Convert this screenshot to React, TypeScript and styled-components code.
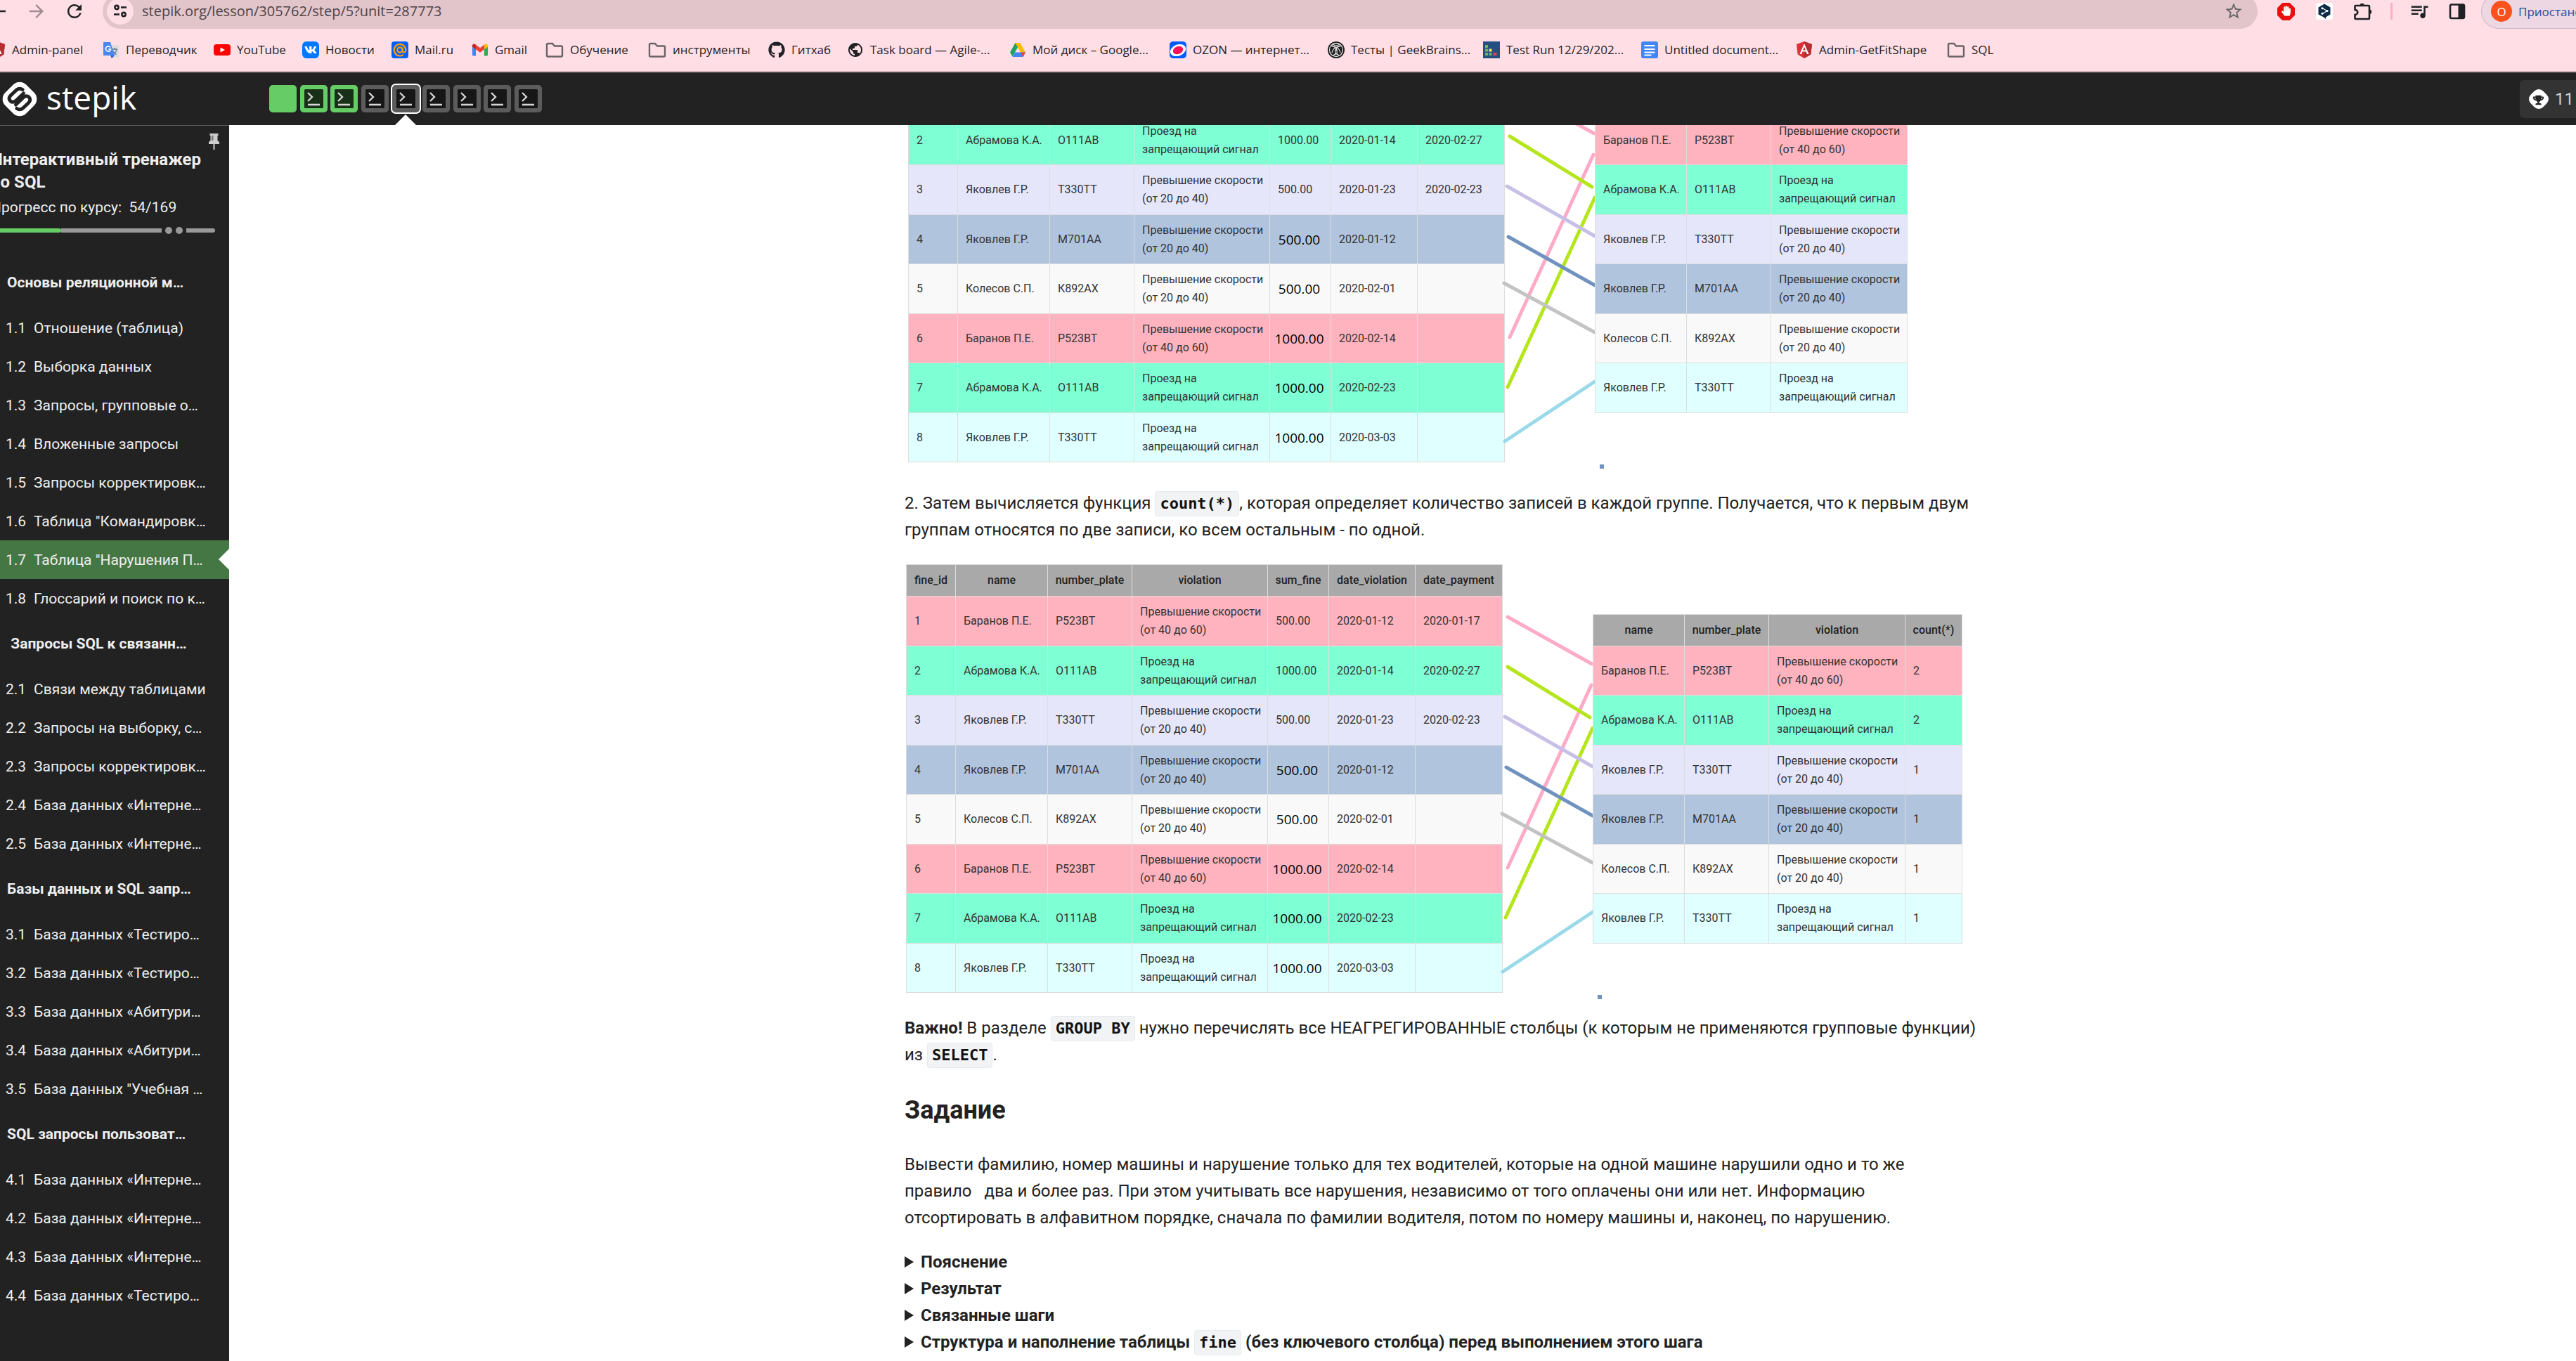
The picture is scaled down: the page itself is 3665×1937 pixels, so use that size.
import React from "react";
import styled, { createGlobalStyle } from "styled-components";
import { MdArrowBack, MdArrowForward, MdRefresh, MdStarBorder, MdQueueMusic, MdPublic } from "react-icons/md";
import { FaGithub, FaHandPaper, FaTrophy, FaVk } from "react-icons/fa";

const GlobalStyle = createGlobalStyle`
  *, *::before, *::after { box-sizing: border-box; }
  html, body { margin: 0; padding: 0; background: #fff; }
  body { font-family: Roboto, "Noto Sans", sans-serif; color: #222; overflow: hidden; }
  button { font: inherit; border: 0; padding: 0; background: none; cursor: pointer; }
  a { color: inherit; text-decoration: none; }
  svg { display: block; flex: none; }
`;

const Window = styled.div`
  display: flex;
  flex-direction: column;
  height: 100vh;
  overflow: hidden;
`;

/* ---------- browser chrome ---------- */

const Browser = styled.div`
  flex: none;
  overflow: hidden;
  background: #ffdfe5;
  border-bottom: 2px solid #cdb1b8;
  font-family: "Open Sans", "Noto Sans", sans-serif;
  color: #1f2124;
`;

const Toolbar = styled.div`
  display: flex;
  align-items: center;
  height: 32px;
`;

const NavButtons = styled.div`
  flex: none;
  display: flex;
  align-items: center;
  gap: 24px;
  width: 146px;
  margin-left: -17px;
  margin-right: 17px;
`;

const IconButton = styled.button<{ $tone?: string }>`
  flex: none;
  display: grid;
  place-items: center;
  color: ${(p) => p.$tone ?? "#1f2124"};
`;

const AddressBar = styled.div`
  flex: 1;
  display: flex;
  align-items: center;
  height: 50px;
  padding: 0 20px 0 6px;
  border-radius: 25px;
  background: #e1c5ca;
`;

const SiteInfo = styled.button`
  flex: none;
  display: grid;
  place-items: center;
  width: 38px;
  height: 38px;
  border-radius: 50%;
  background: #ffdfe5;
`;

const Url = styled.input`
  flex: 1;
  min-width: 0;
  margin-left: 12px;
  padding: 0;
  border: 0;
  outline: 0;
  background: transparent;
  font: 20px/28px "Open Sans", "Noto Sans", sans-serif;
  color: #4f4347;
`;

const Extensions = styled.div`
  flex: none;
  display: flex;
  align-items: center;
  gap: 30px;
  width: 318px;
  padding-left: 28px;
`;

const Divider = styled.span`
  width: 3px;
  height: 24px;
  margin: 0 -4px;
  background: #ffb0c0;
`;

const MediaControl = styled.button`
  display: grid;
  margin: 0 -3px;
  color: #1f2124;
`;

const Profile = styled.button`
  flex: none;
  display: flex;
  align-items: center;
  gap: 9px;
  width: 135px;
  height: 50px;
  padding-left: 13px;
  overflow: hidden;
  white-space: nowrap;
  border: 1px solid #cdb7c6;
  border-right: 0;
  border-radius: 25px 0 0 25px;
  background: #edd7e2;
  color: #1c4fa1;
  font-size: 17px;
`;

const Avatar = styled.span`
  flex: none;
  display: grid;
  place-items: center;
  width: 30px;
  height: 30px;
  border-radius: 50%;
  background: #f9511d;
  color: #fff;
  font-size: 17px;
`;

const Bookmarks = styled.nav`
  display: grid;
  grid-template-columns: 162px 158px 126px 127px 114px 105px 146px 171px 112px 231px 228px 225px 221px 225px 220px 215px auto;
  align-items: center;
  height: 60px;
  margin: 9px 0 0 -16px;
`;

const Bookmark = styled.a`
  display: flex;
  align-items: center;
  gap: 9px;
  white-space: nowrap;
  font-size: 17px;
  line-height: 24px;
`;

/* ---------- course header ---------- */

const Header = styled.header`
  flex: none;
  display: flex;
  align-items: center;
  height: 75px;
  background: #222;
`;

const Brand = styled.a`
  flex: none;
  display: flex;
  align-items: center;
  gap: 13px;
  width: 383px;
  padding-left: 3px;
  color: #fff;
`;

const BrandName = styled.span`
  padding-bottom: 6px;
  font-family: "Open Sans", "Noto Sans", sans-serif;
  font-size: 46px;
  line-height: 48px;
`;

const Steps = styled.nav`
  flex: none;
  display: flex;
  align-items: center;
  justify-content: space-between;
  align-self: stretch;
  width: 388px;
`;

const Step = styled.a<{ $done?: boolean; $current?: boolean }>`
  position: relative;
  display: grid;
  place-items: center;
  width: 39px;
  height: 39px;
  border-radius: 5px;
  background: ${(p) => (p.$done ? "#6c6" : "#5c5c5c")};
  box-shadow: ${(p) => (p.$current ? "0 0 0 2px #fff" : "none")};
  ${(p) =>
    p.$current &&
    `&::after {
      content: "";
      position: absolute;
      left: 50%;
      bottom: -18px;
      margin-left: -15px;
      border: 15px solid transparent;
      border-top: 0;
      border-bottom-color: #fff;
    }`}
`;

const Score = styled.button`
  flex: none;
  display: flex;
  align-items: center;
  gap: 8px;
  width: 80px;
  height: 54px;
  margin-left: auto;
  padding-left: 12px;
  border-radius: 6px 0 0 6px;
  background: #333;
  color: #ccc;
  font-size: 24px;
`;

/* ---------- layout ---------- */

const Body = styled.div`
  flex: 1;
  min-height: 0;
  display: grid;
  grid-template-columns: 326px 1fr;
`;

const Sidebar = styled.aside`
  overflow: hidden;
  border-top: 1px solid #5a5a5a;
  background: #222;
  color: #eee;
`;

const CourseHead = styled.div`
  position: relative;
  height: 186px;
  margin-left: -13px;
  padding-top: 32px;
`;

const CourseTitle = styled.h2`
  margin: 0;
  font-size: 24px;
  line-height: 32px;
  font-weight: 700;
`;

const CourseProgress = styled.p`
  margin: 4px 0 0;
  font-size: 21px;
  line-height: 32px;
  white-space: pre;
`;

const Track = styled.div`
  display: flex;
  align-items: center;
  height: 10px;
  margin-top: 12px;
`;

const TrackPart = styled.span<{ $w: number; $c: string; $round?: boolean }>`
  width: ${(p) => p.$w}px;
  height: 6px;
  background: ${(p) => p.$c};
  border-radius: ${(p) => (p.$round ? "0 3px 3px 0" : "0")};
`;

const TrackDot = styled.span`
  width: 10px;
  height: 10px;
  margin: 0 0 0 5px;
  border-radius: 50%;
  background: #999;
`;

const TrackGap = styled.span`
  width: 5px;
`;

const Pin = styled.button`
  position: absolute;
  top: 11px;
  right: 14px;
  color: #ccc;
`;

const SectionTitle = styled.h3`
  margin: 0;
  padding-left: 10px;
  height: 74px;
  font-size: 21px;
  line-height: 74px;
  font-weight: 700;
  white-space: pre;
`;

const Lesson = styled.a<{ $active?: boolean }>`
  position: relative;
  display: grid;
  grid-template-columns: 40px 1fr;
  align-items: center;
  height: 55px;
  padding-left: 8px;
  font-size: 21px;
  white-space: nowrap;
  background: ${(p) => (p.$active ? "#457745" : "transparent")};
  ${(p) =>
    p.$active &&
    `&::after {
      content: "";
      position: absolute;
      right: 0;
      top: 12px;
      border: 15px solid transparent;
      border-left: 0;
      border-right-color: #fff;
    }`}
`;

const Main = styled.main`
  overflow: hidden;
  padding-left: 113px;
`;

const Column = styled.article`
  max-width: 1530px;
  margin: 0 auto;
  font-size: 24px;
  line-height: 38px;
  white-space: nowrap;
`;

const Paragraph = styled.p<{ $top: number }>`
  margin: ${(p) => p.$top}px 0 0;
`;

const Heading = styled.h2`
  margin: 40px 0 0;
  font-size: 36px;
  line-height: 40px;
  font-weight: 700;
`;

const Code = styled.code`
  display: inline-block;
  margin: -2px 0;
  padding: 0 6px;
  border: 1px solid #e8eaed;
  border-radius: 4px;
  background: #f2f3f5;
  color: #111;
  font: 700 22px/34px "DejaVu Sans Mono", monospace;
  vertical-align: baseline;
`;

const Hints = styled.div`
  margin-top: 25px;
  font-weight: 700;
`;

const HintTitle = styled.summary`
  list-style: none;
  cursor: pointer;
  &::before {
    content: "";
    display: inline-block;
    margin-right: 10px;
    border: 8px solid transparent;
    border-left: 13px solid #222;
    border-right: 0;
  }
`;

/* ---------- grouping figure ---------- */

const Figure = styled.figure<{ $top: number; $indent: number }>`
  display: flex;
  align-items: flex-start;
  margin: ${(p) => p.$top}px 0 0 ${(p) => p.$indent}px;
`;

const Table = styled.table<{ $width: number; $top?: number; $tallFirst?: boolean }>`
  flex: none;
  width: ${(p) => p.$width}px;
  margin-top: ${(p) => p.$top ?? 0}px;
  table-layout: fixed;
  border-collapse: collapse;
  font-size: 16px;
  line-height: 26px;
  color: #333;
  tbody tr { height: ${(p) => (p.$tallFirst ? 71 : 70)}px; }
  tbody tr:nth-child(even) { height: ${(p) => (p.$tallFirst ? 70 : 71)}px; }
`;

const Th = styled.th`
  height: 45px;
  padding: 0;
  border: 1px solid #ddd;
  background: #a9a9a9;
  font-weight: 500;
  text-align: center;
  color: #222;
`;

const Row = styled.tr<{ $tint: string }>`
  background: ${(p) => p.$tint};
`;

const Td = styled.td<{ $retyped?: boolean }>`
  padding: 0 0 0 11px;
  border: 1px solid #ddd;
  ${(p) =>
    p.$retyped &&
    `padding: 0 3px 0 0;
    text-align: center;
    font-family: "Open Sans", "Noto Sans", sans-serif;
    font-size: 19px;
    color: #000;`}
`;

const Links = styled.svg<{ $top: number }>`
  width: 128px;
  height: 616px;
  margin-top: ${(p) => p.$top}px;
  overflow: visible;
`;

/* ---------- icons ---------- */

const SvgIcon = ({ children, size = 24, box = 24 }: { children: React.ReactNode; size?: number; box?: number }) => (
  <svg width={size} height={size} viewBox={`0 0 ${box} ${box}`} fill="none" aria-hidden="true">
    {children}
  </svg>
);

const TuneIcon = () => (
  <SvgIcon size={20} box={20}>
    <g stroke="#1f2124" strokeWidth="2.6">
      <circle cx="5" cy="4.5" r="2.6" /><path d="M11 4.5h8" />
      <circle cx="15" cy="14.5" r="2.6" /><path d="M1 14.5h8" />
    </g>
  </SvgIcon>
);

const AngularIcon = () => (
  <SvgIcon>
    <path d="M12 0 23 4l-1.700 14.500L12 24 2.700 18.500 1 4z" fill="#dd3136" />
    <path d="M12 0v24l9.300-5.500L23 4z" fill="#b52e31" />
    <path d="M12 3 5.500 18h2.600l1.300-3.400h5.200L15.900 18h2.600zm0 4.800 1.900 4.600h-3.800z" fill="#fff" />
  </SvgIcon>
);

const TranslateIcon = () => (
  <SvgIcon>
    <path d="M9 5h13a1 1 0 0 1 1 1v16a1 1 0 0 1-1 1h-8z" fill="#dcdcdc" />
    <path d="M13 11h8M17 9v2m3 0c-.5 4-3 6-5 7m-.500-5c1 3 3 4.500 5 5.500" stroke="#607d9b" strokeWidth="1.500" />
    <path d="M2 1h9l6 19H2a1 1 0 0 1-1-1V2a1 1 0 0 1 1-1z" fill="#4a86f0" />
    <path d="M11 20h6l-4 4z" fill="#3a5bc7" />
    <path d="M11 8.500A3.600 3.600 0 1 0 11.600 11H8.300" stroke="#fff" strokeWidth="1.700" />
  </SvgIcon>
);

const YoutubeIcon = () => (
  <SvgIcon>
    <rect y="4" width="24" height="16" rx="4" fill="#f00" />
    <path d="m9.500 8.500 6.500 3.500-6.500 3.500z" fill="#fff" />
  </SvgIcon>
);

const VkTile = styled.span`
  display: grid;
  place-items: center;
  width: 24px;
  height: 24px;
  border-radius: 6px;
  background: #07f;
  color: #fff;
`;

const MailIcon = () => (
  <SvgIcon>
    <rect width="24" height="24" rx="4" fill="#005ff9" />
    <g stroke="#ff9e00" strokeWidth="2.200">
      <circle cx="12" cy="12" r="3.700" />
      <path d="M15.700 8.500V13c0 4 4.600 3 4.600-1A8.300 8.300 0 1 0 17 18.800" />
    </g>
  </SvgIcon>
);

const GmailIcon = () => (
  <SvgIcon>
    <path d="M1 7v12a1.500 1.500 0 0 0 1.500 1.500H6V11z" fill="#4285f4" />
    <path d="M18 11v9.500h3.500A1.500 1.500 0 0 0 23 19V7z" fill="#34a853" />
    <path d="M18 4.800v6.400l5-3.700V6c0-2.200-2-3-3.500-2.200z" fill="#fbbc04" />
    <path d="M6 11.200V4.800l6 4.500 6-4.500v6.400l-6 4.500z" fill="#ea4335" />
    <path d="M1 6v1.500l5 3.700V4.800l-1.500-1C3 3 1 3.800 1 6z" fill="#c5221f" />
  </SvgIcon>
);

const FolderIcon = () => (
  <SvgIcon size={26} box={26}>
    <path d="M2 5.500a1.500 1.500 0 0 1 1.500-1.500H10l3 3.500h9.500A1.500 1.500 0 0 1 24 9v12a1.500 1.500 0 0 1-1.500 1.500h-19A1.500 1.500 0 0 1 2 21z" stroke="#6a6468" strokeWidth="2.400" />
  </SvgIcon>
);

const DriveIcon = () => (
  <SvgIcon>
    <path d="M8.500 2h7L8 15.500 4.500 21.500 1 15.500z" fill="#1ea362" />
    <path d="M8.500 2h7L23 15.500h-7z" fill="#fbbc04" />
    <path d="M8 15.500h15l-3.500 6.500h-15z" fill="#4285f4" />
    <path d="M16 15.500h7l-3.500 6.500z" fill="#ea4335" />
  </SvgIcon>
);

const OzonIcon = () => (
  <SvgIcon>
    <rect width="24" height="24" rx="5" fill="#005bff" />
    <ellipse cx="12" cy="12.500" rx="11.500" ry="8" transform="rotate(-22 12 12.500)" fill="#fff" />
    <ellipse cx="12" cy="12.500" rx="7.500" ry="5.500" transform="rotate(-22 12 12.500)" fill="#f91155" />
  </SvgIcon>
);

const GeekIcon = () => (
  <SvgIcon>
    <circle cx="12" cy="12" r="12" fill="#1d1d1d" />
    <g stroke="#ddd" strokeWidth="1.300">
      <circle cx="12" cy="12" r="9.500" />
      <path d="M5 6c6 1 9 5 8 12M19 6c-6 1-9 5-8 12M6 16c1-4 4-7 6-8 2 1 5 4 6 8M8 4c2 3 6 3 8 0M8 20c2-3 6-3 8 0" />
    </g>
  </SvgIcon>
);

const TestRunIcon = () => (
  <SvgIcon>
    <path d="M0 0h24v24H0z" fill="#24507f" />
    <path d="M3 5h4v4H3zM3 10.500h4v4H3zM3 16h4v4H3zM8.500 16h4v4h-4z" fill="#65b95b" />
    <path d="M8.500 10.500h4v4h-4z" fill="#ffe14d" />
    <path d="M14.500 16h5v4h-5z" fill="#e5404c" />
  </SvgIcon>
);

const DocIcon = () => (
  <SvgIcon>
    <rect width="24" height="24" rx="3" fill="#4285f4" />
    <path d="M4.500 6h15M4.500 11h15M4.500 15.500h15M4.500 19.500h10" stroke="#fff" strokeWidth="2.200" />
  </SvgIcon>
);

const AdblockIcon = () => (
  <SvgIcon size={25}>
    <path d="M7 0h10l7 7v10l-7 7H7l-7-7V7z" fill="#ea1010" />
    <g transform="translate(5 4)"><FaHandPaper size={14} color="#fff" /></g>
  </SvgIcon>
);

const DeeplIcon = () => (
  <SvgIcon>
    <rect width="24" height="24" rx="3" fill="#fff" />
    <path d="m12 1.500 8.500 5v10L14 20.500V23l-3-2.500-7.500-4v-10z" fill="#0f2b46" />
    <path d="m9 7.500 7 4-7 4" stroke="#fff" strokeWidth="1.200" />
    <circle cx="9" cy="7.800" r="1.600" fill="#fff" /><circle cx="16" cy="11.500" r="1.600" fill="#fff" /><circle cx="9" cy="15.300" r="1.600" fill="#fff" />
  </SvgIcon>
);

const PuzzleIcon = () => (
  <SvgIcon size={26} box={26}>
    <path d="M2.500 5h18.500a1 1 0 0 1 1 1v17a1 1 0 0 1-1 1H2.500a1 1 0 0 1-1-1v-5c5 0 5-7 0-7V6a1 1 0 0 1 1-1z" stroke="#1f2124" strokeWidth="2.600" />
    <path d="M8.500 5a3.200 3.200 0 0 1 6.400 0zM22 10.500a3.200 3.200 0 0 1 0 6.400z" fill="#1f2124" />
  </SvgIcon>
);

const PanelIcon = () => (
  <SvgIcon>
    <rect x="2" y="2.500" width="20" height="19.500" rx="2" stroke="#1f2124" strokeWidth="2.600" />
    <path d="M13.500 2.500H21v19.500h-7.500z" fill="#1f2124" />
  </SvgIcon>
);

const StepikMark = () => (
  <svg width="50" height="50" viewBox="0 0 50 50" fill="none" aria-hidden="true">
    <rect x="4" y="4" width="42" height="42" rx="13" transform="rotate(45 25 25)" fill="#fff" />
    <g stroke="#222" strokeWidth="5" strokeLinecap="round" strokeLinejoin="round">
      <path d="M29 11.500c-3-2-6-1.500-8.500.500l-8 7.500c-3 3-3 6-.500 8.500 2.500 2 5 1.500 7.500-.500L30.500 17" />
      <path d="M21 38.500c3 2 6 1.500 8.500-.500l8-7.500c3-3 3-6 .500-8.500-2.500-2-5-1.500-7.500.500L19.500 33" />
    </g>
  </svg>
);

const TerminalIcon = ({ done }: { done?: boolean }) => (
  <SvgIcon size={27} box={27}>
    <rect width="27" height="27" rx="1.500" fill={done ? "#183018" : "#161616"} />
    <path d="m5 5 6 6-6 6" stroke="#d4d4d4" strokeWidth="2.400" />
    <path d="M5 22h17" stroke="#d4d4d4" strokeWidth="2.600" />
  </SvgIcon>
);

const ScoreIcon = () => (
  <SvgIcon size={30} box={30}>
    <rect x="2.500" y="2.500" width="25" height="25" rx="9" transform="rotate(45 15 15)" fill="#fff" />
    <g transform="translate(7 9)"><FaTrophy size={15} color="#222" /></g>
  </SvgIcon>
);

const PinIcon = () => (
  <svg width="15" height="24" viewBox="0 0 15 24" aria-hidden="true">
    <path d="M1.500 0h12v3h-1v7l2.500 2v3H0v-3l2.500-2V3h-1zM6.500 15h2v8h-2z" fill="#ccc" />
    <path d="M4 3h2.500v7H4z" fill="#777" />
  </svg>
);

/* ---------- data ---------- */

const bookmarks: [React.ReactNode, string][] = [
  [<AngularIcon />, "Admin-panel"],
  [<TranslateIcon />, "Переводчик"],
  [<YoutubeIcon />, "YouTube"],
  [<VkTile><FaVk size={18} /></VkTile>, "Новости"],
  [<MailIcon />, "Mail.ru"],
  [<GmailIcon />, "Gmail"],
  [<FolderIcon />, "Обучение"],
  [<FolderIcon />, "инструменты"],
  [<FaGithub size={24} />, "Гитхаб"],
  [<MdPublic size={24} />, "Task board — Agile-..."],
  [<DriveIcon />, "Мой диск – Google..."],
  [<OzonIcon />, "OZON — интернет..."],
  [<GeekIcon />, "Тесты | GeekBrains..."],
  [<TestRunIcon />, "Test Run 12/29/202..."],
  [<DocIcon />, "Untitled document..."],
  [<AngularIcon />, "Admin-GetFitShape"],
  [<FolderIcon />, "SQL"],
];

const sections: { title: string; lessons: [string, string][] }[] = [
  {
    title: "Основы реляционной м…",
    lessons: [
      ["1.1", "Отношение (таблица)"],
      ["1.2", "Выборка данных"],
      ["1.3", "Запросы, групповые о…"],
      ["1.4", "Вложенные запросы"],
      ["1.5", "Запросы корректировк…"],
      ["1.6", 'Таблица "Командировк…'],
      ["1.7", 'Таблица "Нарушения П…'],
      ["1.8", "Глоссарий и поиск по к…"],
    ],
  },
  {
    title: " Запросы SQL к связанн…",
    lessons: [
      ["2.1", "Связи между таблицами"],
      ["2.2", "Запросы на выборку, с…"],
      ["2.3", "Запросы корректировк…"],
      ["2.4", "База данных «Интерне…"],
      ["2.5", "База данных «Интерне…"],
    ],
  },
  {
    title: "Базы данных и SQL запр…",
    lessons: [
      ["3.1", "База данных «Тестиро…"],
      ["3.2", "База данных «Тестиро…"],
      ["3.3", "База данных «Абитури…"],
      ["3.4", "База данных «Абитури…"],
      ["3.5", 'База данных "Учебная …'],
    ],
  },
  {
    title: "SQL запросы пользоват…",
    lessons: [
      ["4.1", "База данных «Интерне…"],
      ["4.2", "База данных «Интерне…"],
      ["4.3", "База данных «Интерне…"],
      ["4.4", "База данных «Тестиро…"],
    ],
  },
];

const pink = "#ffb3bf";
const mint = "#7fffd4";
const lavender = "#e5e6fa";
const steel = "#b0c4de";
const grey = "#f9f9f9";
const cyan = "#e0ffff";

const fast40 = ["Превышение скорости", "(от 20 до 40)"];
const fast60 = ["Превышение скорости", "(от 40 до 60)"];
const signal = ["Проезд на", "запрещающий сигнал"];

type Cell = string | string[];
type Line = { tint: string; cells: Cell[] };

const fines: Line[] = [
  { tint: pink, cells: ["1", "Баранов П.Е.", "Р523ВТ", fast60, "500.00", "2020-01-12", "2020-01-17"] },
  { tint: mint, cells: ["2", "Абрамова К.А.", "О111АВ", signal, "1000.00", "2020-01-14", "2020-02-27"] },
  { tint: lavender, cells: ["3", "Яковлев Г.Р.", "Т330ТТ", fast40, "500.00", "2020-01-23", "2020-02-23"] },
  { tint: steel, cells: ["4", "Яковлев Г.Р.", "М701АА", fast40, "500.00", "2020-01-12", ""] },
  { tint: grey, cells: ["5", "Колесов С.П.", "К892АХ", fast40, "500.00", "2020-02-01", ""] },
  { tint: pink, cells: ["6", "Баранов П.Е.", "Р523ВТ", fast60, "1000.00", "2020-02-14", ""] },
  { tint: mint, cells: ["7", "Абрамова К.А.", "О111АВ", signal, "1000.00", "2020-02-23", ""] },
  { tint: cyan, cells: ["8", "Яковлев Г.Р.", "Т330ТТ", signal, "1000.00", "2020-03-03", ""] },
];

const groups: Line[] = [
  { tint: pink, cells: ["Баранов П.Е.", "Р523ВТ", fast60, "2"] },
  { tint: mint, cells: ["Абрамова К.А.", "О111АВ", signal, "2"] },
  { tint: lavender, cells: ["Яковлев Г.Р.", "Т330ТТ", fast40, "1"] },
  { tint: steel, cells: ["Яковлев Г.Р.", "М701АА", fast40, "1"] },
  { tint: grey, cells: ["Колесов С.П.", "К892АХ", fast40, "1"] },
  { tint: cyan, cells: ["Яковлев Г.Р.", "Т330ТТ", signal, "1"] },
];

const fineHead = ["fine_id", "name", "number_plate", "violation", "sum_fine", "date_violation", "date_payment"];
const groupHead = ["name", "number_plate", "violation", "count(*)"];
const fineCols = [70, 131, 120, 193, 87, 123, 124];
const groupCols = [130, 120, 194, 81];

const links: [string, number, number, number, number][] = [
  ["#ffaac6", 7, 75, 127, 142],
  ["#ffaac6", 7, 432, 126, 172],
  ["#b5e61d", 7, 146, 124, 218],
  ["#b5e61d", 4, 503, 128, 233],
  ["#c8bfe7", 3, 217, 128, 288],
  ["#7092be", 5, 289, 128, 358],
  ["#c3c3c3", -1, 355, 128, 425],
  ["#99d9ea", 0, 580, 128, 495],
];

const DataTable = ({
  widths, head, lines, top, tallFirst, sumIndex = -1,
}: {
  widths: number[]; head?: string[]; lines: Line[]; top?: number; tallFirst?: boolean; sumIndex?: number;
}) => (
  <Table $width={widths.reduce((a, b) => a + b, 0)} $top={top} $tallFirst={tallFirst}>
    <colgroup>{widths.map((w, i) => <col key={i} width={w} />)}</colgroup>
    {head && <thead><tr>{head.map((h) => <Th key={h} scope="col">{h}</Th>)}</tr></thead>}
    <tbody>
      {lines.map((line, r) => (
        <Row key={r} $tint={line.tint}>
          {widths.map((_, c) => {
            const cell = line.cells[c];
            return (
              <Td key={c} $retyped={c === sumIndex && Number(line.cells[0]) > 3}>
                {Array.isArray(cell) ? <>{cell[0]}<br />{cell[1]}</> : cell}
              </Td>
            );
          })}
        </Row>
      ))}
    </tbody>
  </Table>
);

const LinkLines = ({ top }: { top: number }) => (
  <Links $top={top} aria-hidden="true">
    {links.map(([c, x1, y1, x2, y2], i) => (
      <line key={i} x1={x1} y1={y1} x2={x2} y2={y2} stroke={c} strokeWidth={5} strokeLinecap="round" />
    ))}
    <rect x="135" y="613" width="6" height="6" fill="#7092be" />
  </Links>
);

export default function App() {
  return (
    <Window>
      <GlobalStyle />
      <Browser>
        <Toolbar>
          <NavButtons>
            <IconButton aria-label="Назад"><MdArrowBack size={30} /></IconButton>
            <IconButton aria-label="Вперёд" $tone="#a08d93"><MdArrowForward size={30} /></IconButton>
            <IconButton aria-label="Обновить"><MdRefresh size={30} /></IconButton>
          </NavButtons>
          <AddressBar>
            <SiteInfo aria-label="Сведения о сайте"><TuneIcon /></SiteInfo>
            <Url aria-label="Адрес" defaultValue="stepik.org/lesson/305762/step/5?unit=287773" />
            <IconButton aria-label="Добавить в закладки" $tone="#666"><MdStarBorder size={28} /></IconButton>
          </AddressBar>
          <Extensions>
            <AdblockIcon />
            <DeeplIcon />
            <PuzzleIcon />
            <Divider />
            <MediaControl aria-label="Медиа"><MdQueueMusic size={30} /></MediaControl>
            <PanelIcon />
          </Extensions>
          <Profile><Avatar>О</Avatar>Приостано</Profile>
        </Toolbar>
        <Bookmarks>
          {bookmarks.map(([icon, label], i) => (
            <Bookmark key={i} href="#">{icon}{label}</Bookmark>
          ))}
        </Bookmarks>
      </Browser>

      <Header>
        <Brand href="#"><StepikMark /><BrandName>stepik</BrandName></Brand>
        <Steps>
          {Array.from({ length: 9 }, (_, i) => (
            <Step key={i} href="#" aria-label={`Шаг ${i + 1}`} $done={i < 3} $current={i === 4}>
              {i > 0 && <TerminalIcon done={i < 3} />}
            </Step>
          ))}
        </Steps>
        <Score><ScoreIcon />11</Score>
      </Header>

      <Body>
        <Sidebar>
          <CourseHead>
            <CourseTitle>Интерактивный тренажер<br />по SQL</CourseTitle>
            <CourseProgress>Прогресс по курсу:  54/169</CourseProgress>
            <Track>
              <TrackPart $w={100} $c="#6c6" $round />
              <TrackPart $w={143} $c="#999" />
              <TrackDot />
              <TrackDot />
              <TrackGap />
              <TrackPart $w={41} $c="#999" $round />
            </Track>
            <Pin aria-label="Закрепить"><PinIcon /></Pin>
          </CourseHead>
          {sections.map((s) => (
            <nav key={s.title} aria-label={s.title.trim()}>
              <SectionTitle>{s.title}</SectionTitle>
              {s.lessons.map(([n, t]) => (
                <Lesson key={n} href="#" $active={n === "1.7"}><span>{n}</span><span>{t}</span></Lesson>
              ))}
            </nav>
          ))}
        </Sidebar>

        <Main>
          <Column>
            <Figure $top={-14} $indent={5}>
              <DataTable widths={fineCols} lines={fines.slice(1)} sumIndex={4} />
              <LinkLines top={-116} />
              <DataTable widths={groupCols.slice(0, 3)} lines={groups} />
            </Figure>
            <Paragraph $top={33}>
              2. Затем вычисляется функция <Code>count(*)</Code>, которая определяет количество записей в каждой группе. Получается, что к первым двум
              <br />
              группам относятся по две записи, ко всем остальным - по одной.
            </Paragraph>
            <Figure $top={30} $indent={2}>
              <DataTable widths={fineCols} head={fineHead} lines={fines} sumIndex={4} tallFirst />
              <LinkLines top={0} />
              <DataTable widths={groupCols} head={groupHead} lines={groups} top={71} />
            </Figure>
            <Paragraph $top={25}>
              <b>Важно!</b> В разделе <Code>GROUP BY</Code> нужно перечислять все НЕАГРЕГИРОВАННЫЕ столбцы (к которым не применяются групповые функции)
              <br />
              из <Code>SELECT</Code>.
            </Paragraph>
            <Heading>Задание</Heading>
            <Paragraph $top={38}>
              Вывести фамилию, номер машины и нарушение только для тех водителей, которые на одной машине нарушили одно и то же
              <br />
              правило{"\u00a0\u00a0 "}два и более раз. При этом учитывать все нарушения, независимо от того оплачены они или нет. Информацию
              <br />
              отсортировать в алфавитном порядке, сначала по фамилии водителя, потом по номеру машины и, наконец, по нарушению.
            </Paragraph>
            <Hints>
              <details><HintTitle>Пояснение</HintTitle></details>
              <details><HintTitle>Результат</HintTitle></details>
              <details><HintTitle>Связанные шаги</HintTitle></details>
              <details><HintTitle>Структура и наполнение таблицы <Code>fine</Code> (без ключевого столбца) перед выполнением этого шага</HintTitle></details>
            </Hints>
          </Column>
        </Main>
      </Body>
    </Window>
  );
}
